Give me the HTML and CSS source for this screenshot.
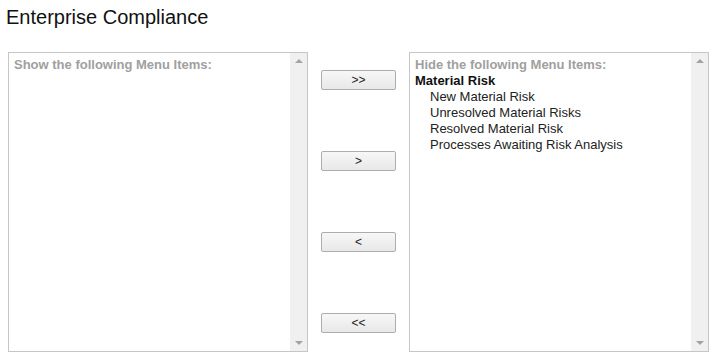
FILE: index.html
```html
<!DOCTYPE html>
<html>
<head>
<meta charset="utf-8">
<link rel="stylesheet" href="styles.css">
</head>
<body>
<div class="title">Enterprise Compliance</div>
<div class="lists">
  <div class="listbox">
    <div class="items">
      <div class="heading">Show the following Menu Items:</div>
    </div>
    <div class="scrollbar">
      <span class="arrow up"></span>
      <span class="arrow down"></span>
    </div>
  </div>
  <div class="controls">
    <button class="btn">&gt;&gt;</button>
    <button class="btn">&gt;</button>
    <button class="btn">&lt;</button>
    <button class="btn">&lt;&lt;</button>
  </div>
  <div class="listbox">
    <div class="items">
      <div class="heading">Hide the following Menu Items:</div>
      <div class="group">Material Risk</div>
      <div class="item">New Material Risk</div>
      <div class="item">Unresolved Material Risks</div>
      <div class="item">Resolved Material Risk</div>
      <div class="item">Processes Awaiting Risk Analysis</div>
    </div>
    <div class="scrollbar">
      <span class="arrow up"></span>
      <span class="arrow down"></span>
    </div>
  </div>
</div>
</body>
</html>
```
FILE: styles.css
```css
html, body {
  margin: 0;
  padding: 0;
  background: #fff;
  font-family: "Liberation Sans", Arial, sans-serif;
}
.title {
  padding: 6px 0 0 6px;
  font-size: 20px;
  line-height: 23px;
  color: #111;
}
.lists {
  display: flex;
  margin: 23px 0 0 8px;
}
.listbox {
  box-sizing: border-box;
  width: 300px;
  height: 300px;
  border: 1px solid #c6c6c6;
  display: flex;
}
.items {
  flex: 1;
  padding: 4px 5px;
  font-size: 13px;
  line-height: 16px;
  color: #222;
}
.heading {
  font-weight: bold;
  color: #a0a0a0;
}
.group {
  font-weight: bold;
  color: #111;
}
.item {
  padding-left: 15px;
}
.scrollbar {
  width: 17px;
  background: #f0f0f0;
  display: flex;
  flex-direction: column;
  justify-content: space-between;
  align-items: center;
  padding: 6px 0;
}
.arrow {
  width: 0;
  height: 0;
  border-left: 4px solid transparent;
  border-right: 4px solid transparent;
}
.arrow.up {
  border-bottom: 4px solid #a3a3a3;
}
.arrow.down {
  border-top: 4px solid #a3a3a3;
}
.controls {
  width: 101px;
  display: flex;
  flex-direction: column;
  align-items: flex-start;
  gap: 61px;
  padding: 18px 0 0 13px;
  box-sizing: border-box;
}
.btn {
  box-sizing: border-box;
  width: 75px;
  height: 20px;
  margin: 0;
  padding: 0;
  border: 1px solid #adadad;
  border-radius: 2px;
  background: linear-gradient(#f7f7f7, #e8e8e8);
  font-family: "Liberation Sans", Arial, sans-serif;
  font-size: 12px;
  color: #222;
}
```
